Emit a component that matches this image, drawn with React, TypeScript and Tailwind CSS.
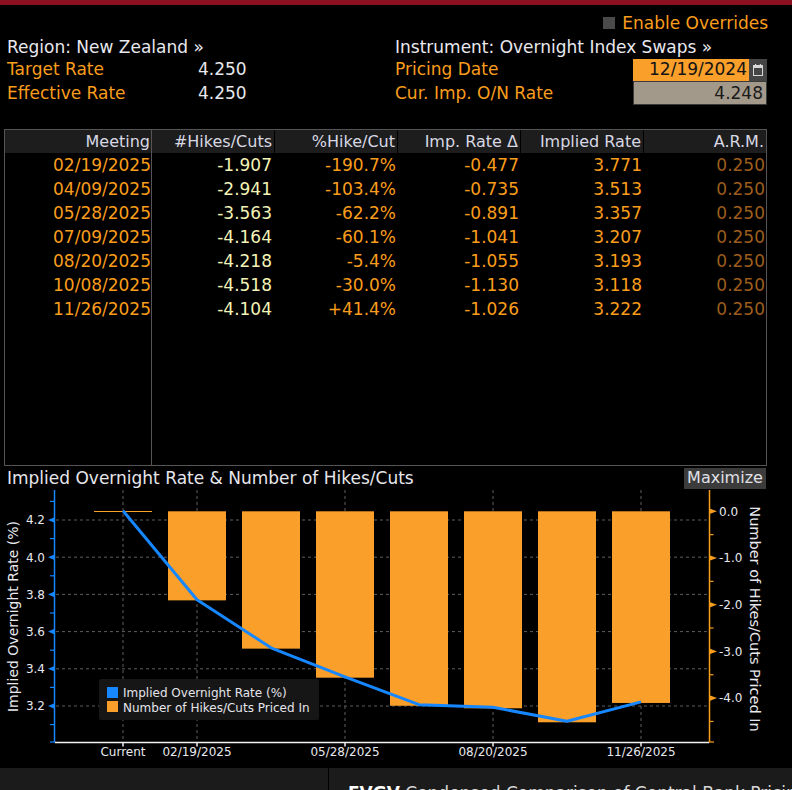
import React from "react";

const rows = [
  ["02/19/2025", "-1.907", "-190.7%", "-0.477", "3.771", "0.250"],
  ["04/09/2025", "-2.941", "-103.4%", "-0.735", "3.513", "0.250"],
  ["05/28/2025", "-3.563", "-62.2%", "-0.891", "3.357", "0.250"],
  ["07/09/2025", "-4.164", "-60.1%", "-1.041", "3.207", "0.250"],
  ["08/20/2025", "-4.218", "-5.4%", "-1.055", "3.193", "0.250"],
  ["10/08/2025", "-4.518", "-30.0%", "-1.130", "3.118", "0.250"],
  ["11/26/2025", "-4.104", "+41.4%", "-1.026", "3.222", "0.250"],
];

// chart scales (page coordinates)
const rateY = (v: number) => 520 + (4.2 - v) * 186;
const hikeY = (v: number) => 511.3 - v * 46.7;
const xs = [123, 197, 271, 345, 419, 493, 567, 641];
const rates = [4.25, 3.771, 3.513, 3.357, 3.207, 3.193, 3.118, 3.222];
const hikes = [-1.907, -2.941, -3.563, -4.164, -4.218, -4.518, -4.104];

function Chart() {
  const leftMajor = [4.2, 4.0, 3.8, 3.6, 3.4, 3.2];
  const leftMinor = [4.3, 4.1, 3.9, 3.7, 3.5, 3.3, 3.1];
  const rightMajor = [0, -1, -2, -3, -4];
  const rightMinor = [-0.5, -1.5, -2.5, -3.5, -4.5];
  const vGrid = [123, 197, 345, 493, 641];
  const xLabels: [number, string][] = [
    [123, "Current"],
    [197, "02/19/2025"],
    [345, "05/28/2025"],
    [493, "08/20/2025"],
    [641, "11/26/2025"],
  ];

  return (
    <svg width="792" height="278" viewBox="0 490 792 278" className="block">
      {/* grid */}
      {leftMajor.map((v) => (
        <line key={v} x1={56} x2={708} y1={rateY(v)} y2={rateY(v)} stroke="#5e5e5e" strokeDasharray="3 3" />
      ))}
      {vGrid.map((x) => (
        <line key={x} x1={x} x2={x} y1={490} y2={742} stroke="#5e5e5e" strokeDasharray="3 3" />
      ))}

      {/* bars */}
      <line x1={94} x2={152} y1={511.5} y2={511.5} stroke="#f99f2a" strokeWidth={1} />
      {hikes.map((h, i) => (
        <rect key={i} x={xs[i + 1] - 29} y={511.3} width={58} height={hikeY(h) - 511.3} fill="#f99f2a" />
      ))}

      {/* rate line */}
      <polyline
        points={xs.map((x, i) => `${x},${rateY(rates[i])}`).join(" ")}
        fill="none"
        stroke="#1787ff"
        strokeWidth={3}
        strokeLinejoin="round"
      />

      {/* legend */}
      <rect x={99} y={679} width={220} height={41} rx={2} fill="#161616" />
      <rect x={107} y={687} width={11} height={11} fill="#1787ff" />
      <text x={123} y={697} fontSize={12} fill="#e4e4ea">Implied Overnight Rate (%)</text>
      <rect x={107} y={701} width={11} height={11} fill="#f99f2a" />
      <text x={123} y={711.5} fontSize={12} fill="#e4e4ea">Number of Hikes/Cuts Priced In</text>

      {/* left axis */}
      <line x1={54.5} x2={54.5} y1={490} y2={742.5} stroke="#1787ff" strokeWidth={1.5} />
      {leftMinor.map((v) => (
        <line key={v} x1={50} x2={54.5} y1={rateY(v)} y2={rateY(v)} stroke="#1787ff" strokeWidth={1.2} />
      ))}
      <line x1={50} x2={54.5} y1={742} y2={742} stroke="#1787ff" strokeWidth={1.2} />
      {leftMajor.map((v) => (
        <g key={v}>
          <polygon points={`48,${rateY(v)} 54.5,${rateY(v) - 2.8} 54.5,${rateY(v) + 2.8}`} fill="#1787ff" />
          <text x={45} y={rateY(v) + 4.3} fontSize={12} textAnchor="end" fill="#e8e8ee">
            {v.toFixed(1)}
          </text>
        </g>
      ))}
      <text transform="translate(18,616.5) rotate(-90)" fontSize={14} textAnchor="middle" fill="#e8e8ee">
        Implied Overnight Rate (%)
      </text>

      {/* right axis */}
      <line x1={709.5} x2={709.5} y1={490} y2={742.5} stroke="#f99d1c" strokeWidth={1.5} />
      {rightMinor.map((v) => (
        <line key={v} x1={709.5} x2={713.5} y1={hikeY(v)} y2={hikeY(v)} stroke="#f99d1c" strokeWidth={1.2} />
      ))}
      <line x1={709.5} x2={714} y1={742} y2={742} stroke="#f99d1c" strokeWidth={1.2} />
      {rightMajor.map((v) => (
        <g key={v}>
          <polygon points={`717,${hikeY(v)} 709.5,${hikeY(v) - 2.8} 709.5,${hikeY(v) + 2.8}`} fill="#f99d1c" />
          <text x={719} y={hikeY(v) + 4.3} fontSize={12} fill="#e8e8ee">
            {v.toFixed(1)}
          </text>
        </g>
      ))}
      <text transform="translate(750,619) rotate(90)" fontSize={14.5} textAnchor="middle" fill="#e8e8ee">
        Number of Hikes/Cuts Priced In
      </text>

      {/* bottom axis */}
      <line x1={55} x2={709} y1={742.5} y2={742.5} stroke="#f2f2f2" strokeWidth={1.5} />
      {xLabels.map(([x, label]) => (
        <g key={label}>
          <line x1={x} x2={x} y1={742} y2={746.5} stroke="#f2f2f2" strokeWidth={1.5} />
          <text x={x} y={756} fontSize={12} textAnchor="middle" fill="#e8e8ee">
            {label}
          </text>
        </g>
      ))}
    </svg>
  );
}

export default function App() {
  return (
    <div className="w-[792px] h-[790px] overflow-hidden bg-black font-['DejaVu_Sans',sans-serif] text-[17px] leading-none text-[#e8e8ee]">
      <div className="h-[5px] bg-[#8b1122]" />

      {/* Info header */}
      <div className="pt-[6px]">
        <div className="h-[24px] flex items-center justify-end pr-[24px] gap-[7px]">
          <span className="w-[12px] h-[12px] bg-[#4a4a4a]" />
          <span className="text-[#f99d1c]">Enable Overrides</span>
        </div>
        <div className="grid grid-cols-[388px_1fr] pl-[7px]">
          <div>
            <div className="h-[23px] flex items-center pt-[1px]">Region: New Zealand »</div>
            <div className="h-[23px] flex items-center">
              <span className="w-[191px] text-[#f99d1c]">Target Rate</span>
              <span>4.250</span>
            </div>
            <div className="h-[24px] flex items-center">
              <span className="w-[191px] text-[#f99d1c]">Effective Rate</span>
              <span>4.250</span>
            </div>
          </div>
          <div>
            <div className="h-[23px] flex items-center pt-[1px]">Instrument: Overnight Index Swaps »</div>
            <div className="h-[23px] flex items-center">
              <span className="w-[238px] text-[#f99d1c]">Pricing Date</span>
              <div className="flex h-[22px]">
                <div className="w-[116px] bg-[#f99f2a] text-[#141414] flex items-center justify-end pr-[2px]">12/19/2024</div>
                <div className="w-[18px] bg-[#454545] flex items-center justify-center">
                  <svg width="10" height="12" viewBox="0 0 10 12">
                    <rect x="0.5" y="1.5" width="9" height="10" fill="none" stroke="#d8d8d8" />
                    <rect x="0.5" y="1.5" width="9" height="2.5" fill="#d8d8d8" />
                    <rect x="2" y="0" width="1.2" height="2" fill="#d8d8d8" />
                    <rect x="6.8" y="0" width="1.2" height="2" fill="#d8d8d8" />
                  </svg>
                </div>
              </div>
            </div>
            <div className="h-[24px] flex items-center">
              <span className="w-[238px] text-[#f99d1c]">Cur. Imp. O/N Rate</span>
              <div className="w-[134px] h-[24px] bg-[#a3998b] border border-[#3a3a3a] text-[#1a1a1a] flex items-center justify-end pr-[3px]">
                4.248
              </div>
            </div>
          </div>
        </div>
      </div>

      {/* Table */}
      <div className="mt-[24px] ml-[4px] w-[763px] h-[337px] border border-[#555] flex">
        <div className="w-[147px] shrink-0 border-r border-[#555]">
          <div className="h-[23px] bg-[#1d1d1d] text-[16px] text-[#d8d8e4] flex items-center justify-end pr-[1px]">Meeting</div>
          {rows.map((r) => (
            <div key={r[0]} className="h-[24px] flex items-center justify-end text-[#f99d1c]">
              {r[0]}
            </div>
          ))}
        </div>
        <div className="flex-1">
          <div className="grid grid-cols-5 gap-x-[1px] h-[23px] text-[16px] text-[#d8d8e4]">
            {["#Hikes/Cuts", "%Hike/Cut", "Imp. Rate Δ", "Implied Rate", "A.R.M."].map((h) => (
              <div key={h} className="bg-[#1d1d1d] flex items-center justify-end pr-[2px]">
                {h}
              </div>
            ))}
          </div>
          {rows.map((r) => (
            <div key={r[0]} className="grid grid-cols-5 gap-x-[1px] h-[24px]">
              <div className="flex items-center justify-end pr-[2px] text-[#f3f3b6]">{r[1]}</div>
              <div className="flex items-center justify-end pr-[1px] text-[#f99d1c]">{r[2]}</div>
              <div className="flex items-center justify-end pr-[1px] text-[#f99d1c]">{r[3]}</div>
              <div className="flex items-center justify-end pr-[1px] text-[#f99d1c]">{r[4]}</div>
              <div className="flex items-center justify-end pr-[1px] text-[#9c5d1c]">{r[5]}</div>
            </div>
          ))}
        </div>
      </div>

      {/* Chart header */}
      <div className="h-[24px] flex items-center justify-between pl-[7px] pr-[26px]">
        <span className="text-[#e6e6ec]">Implied Overnight Rate &amp; Number of Hikes/Cuts</span>
        <div className="w-[82px] h-[21px] bg-[#3b3b3b] text-[16px] text-[#e0e0e6] flex items-center justify-center">
          Maximize
        </div>
      </div>

      <Chart />

      {/* Bottom strip */}
      <div className="h-[40px] bg-[#1b1b1b] flex">
        <div className="w-[329px] shrink-0 border-r border-black" />
        <div className="pl-[19px] pt-[17px] text-[17px] text-[#d8d8d8] whitespace-nowrap">
          <span className="font-bold text-white">EVGV</span> Condensed Comparison of Central Bank Pricing
        </div>
      </div>
    </div>
  );
}
